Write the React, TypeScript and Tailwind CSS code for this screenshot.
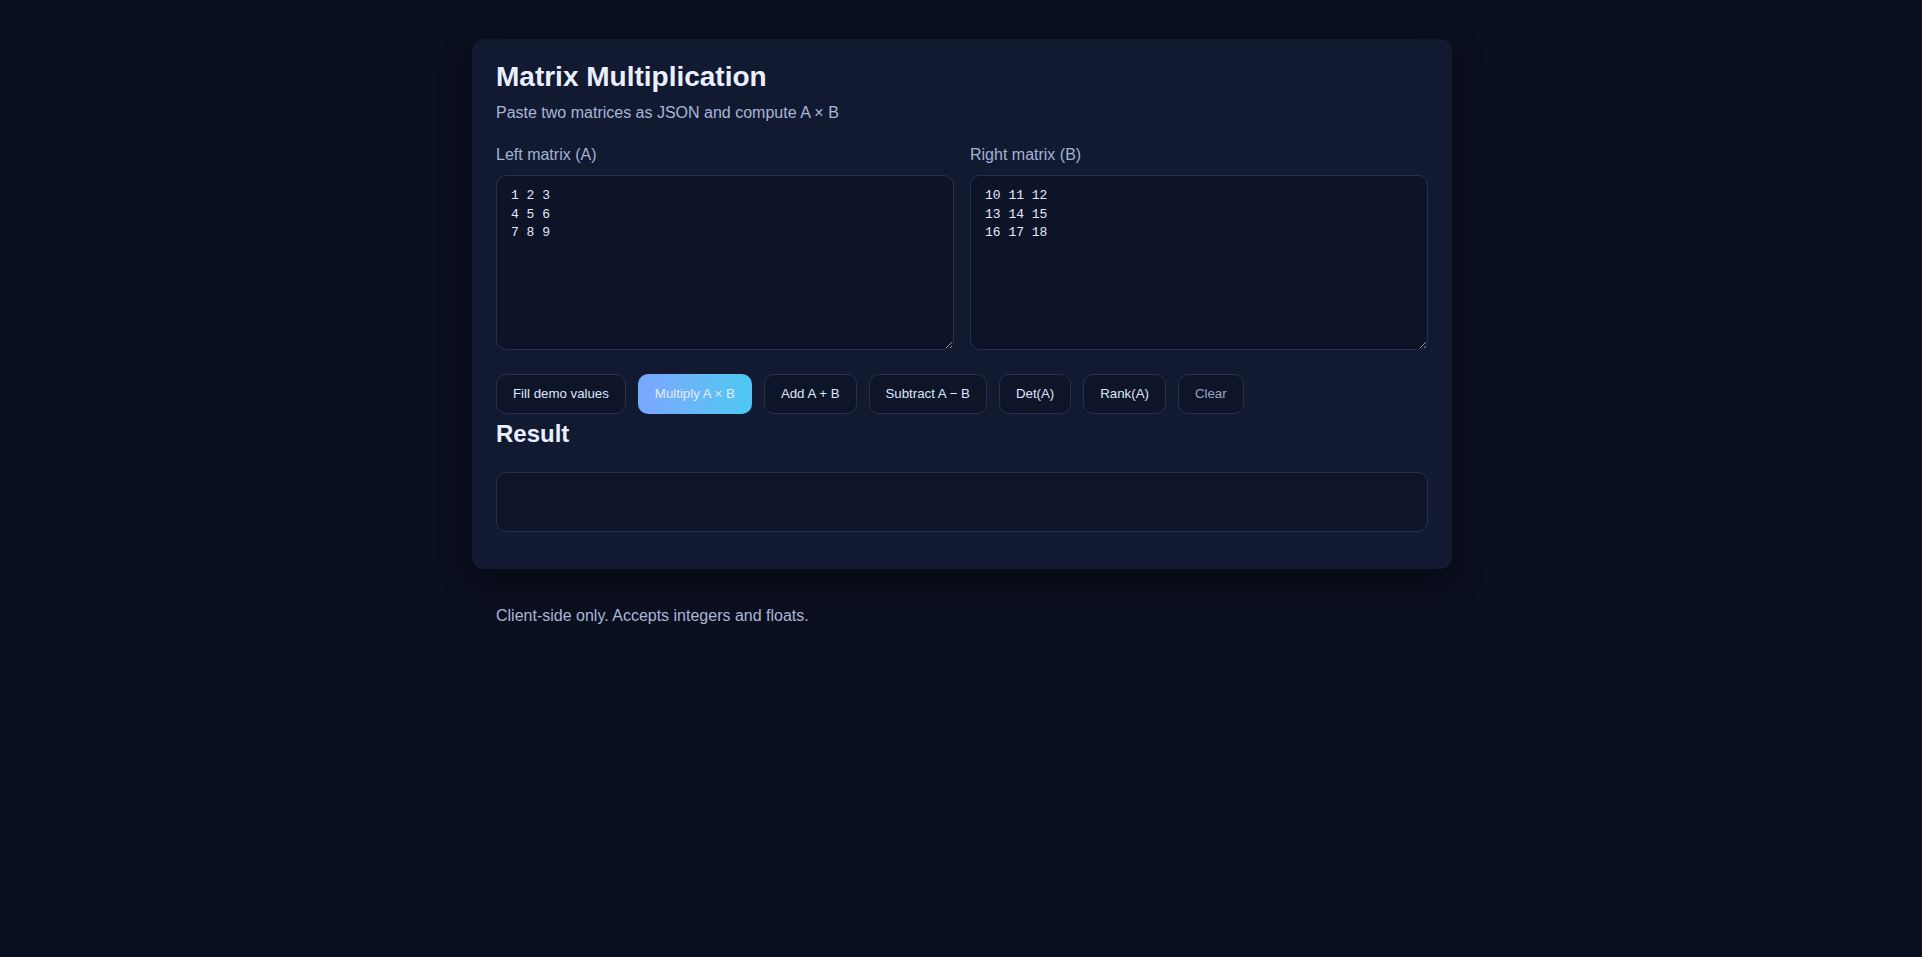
import React from "react";

const btn =
  "h-10 px-4 rounded-[10px] border border-[#27304f] bg-[#0f1529] text-[13.28px] text-[#dce6ff] whitespace-nowrap";

const ta =
  "mt-[10px] h-[175px] w-full rounded-[10px] border border-[#27304f] bg-[#0e1428] pl-[14px] pr-3 pt-[11px] pb-[9px] text-[13px] leading-[18.5px] text-[#e2e9ff] outline-none";

export default function App() {
  return (
    <div
      className="min-h-screen w-full bg-[#0b1020] pt-[39px]"
      style={{ fontFamily: '"Liberation Sans", Arial, sans-serif' }}
    >
      <div className="mx-auto w-[980px] translate-x-[1px]">
        <div className="rounded-xl bg-[#121a31] px-6 pt-[22px] pb-[37px] shadow-[0_12px_32px_rgba(0,0,0,0.45)]">
          <h1 className="text-[28px] leading-[32px] font-bold text-[#eaf0ff]">
            Matrix Multiplication
          </h1>
          <p className="mt-2 text-[16px] leading-6 text-[#a9b6d6]">
            Paste two matrices as JSON and compute A × B
          </p>

          <div className="mt-5 grid grid-cols-2 gap-4">
            <div className="flex flex-col">
              <label className="text-[16px] leading-5 text-[#a3b2d3]">Left matrix (A)</label>
              <textarea
                className={ta}
                style={{ fontFamily: '"Liberation Mono", "Courier New", monospace' }}
                defaultValue={"1 2 3\n4 5 6\n7 8 9"}
              />
            </div>
            <div className="flex flex-col">
              <label className="text-[16px] leading-5 text-[#a3b2d3]">Right matrix (B)</label>
              <textarea
                className={ta}
                style={{ fontFamily: '"Liberation Mono", "Courier New", monospace' }}
                defaultValue={"10 11 12\n13 14 15\n16 17 18"}
              />
            </div>
          </div>

          <div className="mt-6 flex gap-3">
            <button className={btn}>Fill demo values</button>
            <button className="h-10 px-4 rounded-[10px] border border-transparent bg-gradient-to-r from-[#7ba6ff] to-[#4ac9f0] text-[13.28px] text-[#e4ebff] whitespace-nowrap">
              Multiply A × B
            </button>
            <button className={btn}>Add A + B</button>
            <button className={btn}>Subtract A − B</button>
            <button className={btn}>Det(A)</button>
            <button className={btn}>Rank(A)</button>
            <button className="h-10 px-4 rounded-[10px] border border-[#27304f] bg-[#0f1529] text-[13.28px] text-[#97a6c8] whitespace-nowrap">
              Clear
            </button>
          </div>

          <h2 className="mt-[6px] text-[24px] leading-[28px] font-bold text-[#eaf0ff]">Result</h2>
          <div className="mt-6 h-[60px] rounded-[10px] border border-[#27304f] bg-[#0f1428]" />
        </div>

        <p className="mt-[35px] px-6 text-[16px] leading-6 text-[#a9b6d6]">
          Client-side only. Accepts integers and floats.
        </p>
      </div>
    </div>
  );
}
